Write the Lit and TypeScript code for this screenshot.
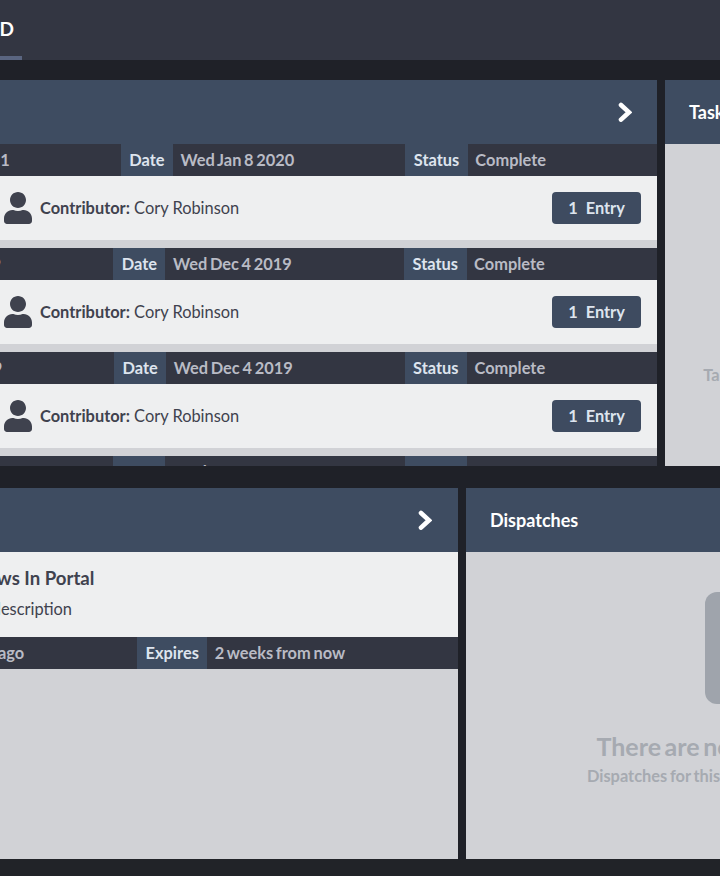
import { LitElement, html, css } from "lit";
import { customElement } from "lit/decorators.js";

interface Entry { version: string; date: string; status: string; }

const ENTRIES: Entry[] = [
  { version: "v2.0.11", date: "Wed Jan 8 2020", status: "Complete" },
  { version: "h2.0.9", date: "Wed Dec 4 2019", status: "Complete" },
  { version: "R2.0.9", date: "Wed Dec 4 2019", status: "Complete" },
  { version: "v2.0.11", date: "Wed Nov 13 2019", status: "In Progress" },
];

const chevron = html`<svg class="chevron" viewBox="0 0 14.4 20.6" width="14.4" height="20.6">
  <polyline points="3,3 11,10.3 3,17.6" fill="none" stroke="#fff" stroke-width="4.6" stroke-linecap="round" stroke-linejoin="miter"></polyline>
</svg>`;

const user = html`<svg class="user" viewBox="0 0 448 512" width="28" height="32">
  <path fill="#3f424e" d="M224 256c70.7 0 128-57.3 128-128S294.7 0 224 0 96 57.3 96 128s57.3 128 128 128zm89.6 32h-16.7c-22.2 10.2-46.9 16-72.9 16s-50.6-5.8-72.9-16h-16.7C60.2 288 0 348.2 0 422.4V464c0 26.5 21.5 48 48 48h352c26.5 0 48-21.5 48-48v-41.6c0-74.2-60.2-134.4-134.4-134.4z"></path>
</svg>`;

@customElement("app-root")
export class AppRoot extends LitElement {
  static styles = css`
    :host {
      display: block;
      width: 720px;
      height: 876px;
      overflow: hidden;
      background: #1f2128;
      font-family: Lato, "Liberation Sans", sans-serif;
    }
    .topbar {
      height: 60px;
      background: #333642;
      display: flex;
    }
    .tab {
      margin-left: -125px;
      width: 147px;
      box-sizing: border-box;
      height: 60px;
      border-bottom: 4px solid #5a6580;
      display: flex;
      align-items: center;
      justify-content: flex-end;
      padding: 2px 8px 0 0;
      color: #fff;
      font-size: 19px;
      font-weight: 700;
      line-height: 54px;
    }
    .grid {
      margin-left: -125px;
      width: 1180px;
      display: grid;
      row-gap: 22px;
      padding-top: 20px;
    }
    .row {
      display: grid;
      column-gap: 8px;
    }
    .row.top { grid-template-columns: 782px 390px; height: 386px; }
    .row.bottom { grid-template-columns: 583px 589px; height: 371px; }
    .panel {
      display: flex;
      flex-direction: column;
      overflow: hidden;
      background: #d1d2d6;
      min-height: 0;
    }
    .head {
      flex: none;
      height: 64px;
      box-sizing: border-box;
      background: #3e4c61;
      display: flex;
      align-items: center;
      justify-content: space-between;
      padding: 0 25px 0 24px;
      color: #fff;
      font-size: 18px;
      font-weight: 700;
    }
    .row.bottom .head { padding-right: 26px; }
    .entry {
      flex: none;
      margin-bottom: 8px;
    }
    .meta {
      display: flex;
      height: 32px;
      background: #333642;
      font-size: 16.4px;
      font-weight: 700;
      line-height: 32px;
      word-spacing: -1.3px;
      white-space: nowrap;
    }
    .label {
      flex: none;
      padding: 0 8.5px;
      background: #3e4c61;
      color: #dde4ee;
    }
    .value {
      flex: 1 1 auto;
      padding: 0 8.5px 0 7.5px;
      color: #b9bbc5;
    }
    .body {
      height: 64px;
      background: #eeeff0;
      display: flex;
      align-items: center;
      padding: 0 16px 0 129px;
      color: #3f424e;
      font-size: 16.4px;
    }
    .user { flex: none; margin-right: 8px; }
    .contrib { flex: 1; padding-bottom: 2px; }
    .contrib b { font-weight: 700; }
    .btn {
      flex: none;
      width: 89px;
      height: 32px;
      box-sizing: border-box;
      padding-bottom: 2px;
      border-radius: 4px;
      background: #3e4b60;
      color: #dde4ee;
      font-weight: 700;
      display: flex;
      align-items: center;
      justify-content: center;
      gap: 8px;
    }
    .news {
      flex: none;
      height: 85px;
      box-sizing: border-box;
      background: #eeeff0;
      padding: 14px 0 0 98px;
      color: #3f424e;
    }
    .news h3 {
      margin: 0;
      font-size: 18.6px;
      font-weight: 700;
      line-height: 24px;
    }
    .news p {
      margin: 8px 0 0 4px;
      font-size: 16.4px;
      line-height: 22px;
    }
    .empty {
      flex: 1;
      display: flex;
      flex-direction: column;
      align-items: center;
      justify-content: center;
      padding-bottom: 34px;
      white-space: nowrap;
    }
    .art {
      width: 112px;
      height: 112px;
      flex: none;
      border-radius: 12px;
      background: #9fa4ac;
    }
    .empty h4 {
      margin: 27px 0 0;
      font-size: 25px;
      word-spacing: -2.5px;
      line-height: 30px;
      font-weight: 700;
      color: #a6aab1;
    }
    .empty span {
      margin-top: 5px;
      font-size: 16.4px;
      word-spacing: -1.3px;
      line-height: 20px;
      font-weight: 700;
      color: #a6aab1;
    }
    .footer { height: 17px; background: #212328; }
  `;

  private meta(pairs: [string, string][]) {
    return html`<div class="meta">
      ${pairs.map(([k, v]) => html`<div class="label">${k}</div><div class="value">${v}</div>`)}
    </div>`;
  }

  private empty(title: string, sub: string) {
    return html`<div class="empty">
      <div class="art"></div>
      <h4>${title}</h4>
      <span>${sub}</span>
    </div>`;
  }

  render() {
    return html`
      <div class="topbar"><div class="tab">DASHBOARD</div></div>
      <div class="grid">
        <div class="row top">
          <section class="panel">
            <div class="head"><span>Releases</span>${chevron}</div>
            ${ENTRIES.map(
              (e) => html`<div class="entry">
                ${this.meta([["Release", e.version], ["Date", e.date], ["Status", e.status]])}
                <div class="body">
                  ${user}
                  <div class="contrib"><b>Contributor:</b> Cory Robinson</div>
                  <div class="btn"><span>1</span><span>Entry</span></div>
                </div>
              </div>`
            )}
          </section>
          <section class="panel">
            <div class="head"><span>Tasks</span></div>
            ${this.empty("There are no tasks", "Tasks for this organization will appear below")}
          </section>
        </div>
        <div class="row bottom">
          <section class="panel">
            <div class="head"><span>News</span>${chevron}</div>
            <div class="news">
              <h3>News In Portal</h3>
              <p>A description</p>
            </div>
            ${this.meta([["Posted", "2 days ago"], ["Expires", "2 weeks from now"]])}
          </section>
          <section class="panel">
            <div class="head"><span>Dispatches</span></div>
            ${this.empty("There are no Dispatches today", "Dispatches for this organization will be seen here")}
          </section>
        </div>
      </div>
      <div class="footer"></div>
    `;
  }
}
